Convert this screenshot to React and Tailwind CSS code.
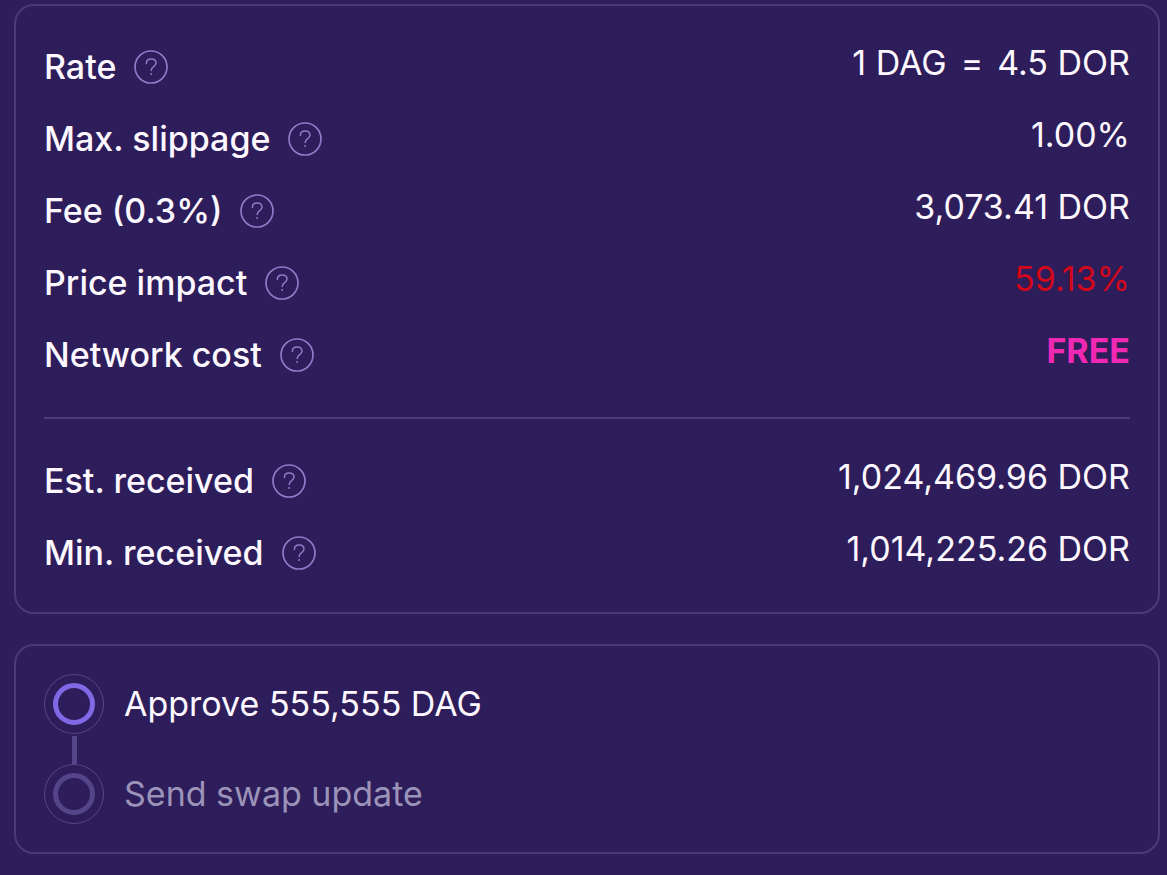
import React from 'react'

const quoteRows = [
  { label: 'Rate', value: <>1 DAG<span className="mx-[14px]">=</span>4.5 DOR</> },
  { label: 'Max. slippage', value: '1.00%' },
  { label: 'Fee (0.3%)', value: '3,073.41 DOR' },
  { label: 'Price impact', value: '59.13%', color: 'text-[#d3071a]' },
  { label: 'Network cost', value: 'FREE', color: 'text-[#f128b4] font-bold' },
]

const receivedRows = [
  { label: 'Est. received', value: '1,024,469.96 DOR' },
  { label: 'Min. received', value: '1,014,225.26 DOR' },
]

const HelpButton = ({ label }) => (
  <button type="button" aria-label={`About ${label}`} className="text-[#9179c8] cursor-pointer">
    <svg viewBox="0 0 34 34" className="w-[34px] h-[34px]" fill="none" stroke="currentColor">
      <circle cx="17" cy="17" r="16" strokeWidth="1.7" />
      <path
        d="M12.4 13.4c0-2.7 2-4.5 4.8-4.5s4.8 1.7 4.8 4.2c0 3.7-4.8 3.4-4.8 7.3"
        strokeWidth="1.5"
        strokeLinecap="round"
      />
      <circle cx="17.2" cy="24" r="1" fill="currentColor" stroke="none" />
    </svg>
  </button>
)

const Rows = ({ rows }) => (
  <dl className="flex flex-col gap-8">
    {rows.map((row) => (
      <div key={row.label} className="flex items-start justify-between">
        <dt className="flex items-center gap-[18px] font-medium leading-10">
          {row.label}
          <HelpButton label={row.label} />
        </dt>
        <dd className={`leading-8 text-right ${row.color || ''}`}>{row.value}</dd>
      </div>
    ))}
  </dl>
)

const StepIcon = ({ active }) => (
  <span className="flex items-center justify-center w-[60px] h-[60px] rounded-full border border-[#564687]">
    <span
      className={`w-[42px] h-[42px] rounded-full border-[5px] ${
        active ? 'border-[#8069e6]' : 'border-[#54458a]'
      }`}
    />
  </span>
)

const App = () => {
  return (
    <main className="min-h-screen bg-[#2d1d5a] pt-1 pb-5 pl-[14px] pr-[7px] flex flex-col gap-[30px] text-[34px] text-[#fdf8ff] font-['Inter',sans-serif]">

      {/* Quote details */}
      <section className="rounded-[20px] border-2 border-[#4a3b78] px-7 pt-[41px] pb-[39px]">
        <Rows rows={quoteRows} />
        <hr className="my-[42px] border-t-2 border-[#4a3b78]" />
        <Rows rows={receivedRows} />
      </section>

      {/* Progress */}
      <section className="rounded-[20px] border-2 border-[#4a3b78] p-7">
        <ol>
          <li className="flex items-center gap-5">
            <StepIcon active />
            <span className="leading-10">Approve 555,555 DAG</span>
          </li>
          <li aria-hidden="true" className="flex justify-center w-[60px] h-[30px] pt-[2px]">
            <span className="w-[5px] bg-[#54458a]" />
          </li>
          <li className="flex items-center gap-5">
            <StepIcon />
            <span className="leading-10 text-[#9c93b9]">Send swap update</span>
          </li>
        </ol>
      </section>
    </main>
  )
}

export default App
